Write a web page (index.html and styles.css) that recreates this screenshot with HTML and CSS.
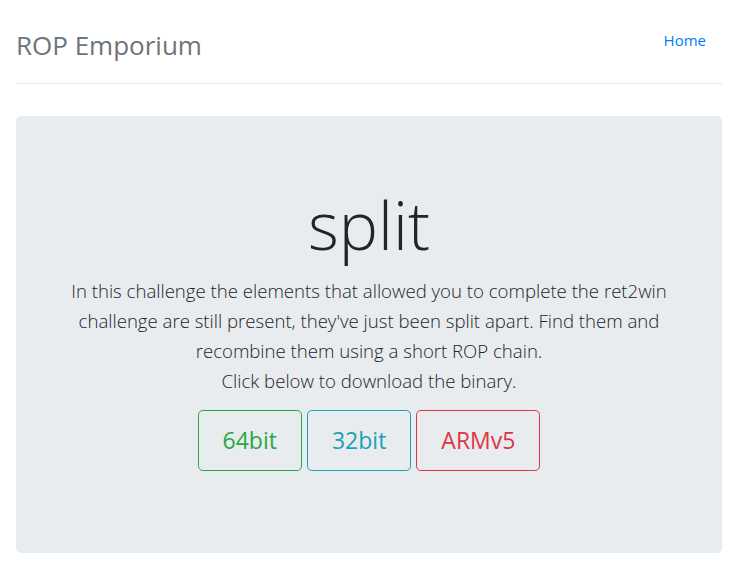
FILE: index.html
```html
<!DOCTYPE html>
<html lang="en">
<head>
<meta charset="utf-8">
<title>split</title>
<link rel="stylesheet" href="styles.css">
</head>
<body>
<div class="container">
  <header class="header">
    <h3 class="brand">ROP Emporium</h3>
    <nav class="nav">
      <a class="nav-link" href="#">Home</a>
    </nav>
  </header>
  <main class="jumbotron">
    <h1 class="display">split</h1>
    <p class="lead">In this challenge the elements that allowed you to complete the ret2win challenge are still present, they've just been split apart. Find them and recombine them using a short ROP chain.<br>Click below to download the binary.</p>
    <div class="buttons">
      <a class="btn btn-success" href="#">64bit</a>
      <a class="btn btn-info" href="#">32bit</a>
      <a class="btn btn-danger" href="#">ARMv5</a>
    </div>
  </main>
</div>
</body>
</html>
```
FILE: styles.css
```css
html, body {
  margin: 0;
  padding: 0;
  background: #fff;
}
body {
  font-family: "Open Sans", "Noto Sans", sans-serif;
  color: #212529;
  font-size: 16px;
  line-height: 1.5;
  padding-top: 20px;
}
.container {
  width: 706px;
  margin-left: 16px;
}
.header {
  display: flex;
  justify-content: space-between;
  align-items: flex-start;
  border-bottom: 1px solid #e5e5e5;
  padding-bottom: 14px;
  margin-bottom: 32px;
}
.brand {
  margin: 1px 0 0;
  font-size: 26px;
  font-weight: 400;
  line-height: 48px;
  color: #6c757d;
}
.nav-link {
  display: block;
  padding: 8px 16px;
  font-size: 15px;
  line-height: 24px;
  color: #007bff;
  text-decoration: none;
}
.jumbotron {
  background: #e9ecef;
  border-radius: 4.8px;
  padding: 64px 32px 66px;
  text-align: center;
}
.display {
  margin: 0 0 8px;
  font-size: 66px;
  font-weight: 300;
  line-height: 88px;
}
.lead {
  margin: 0 0 14px;
  font-size: 18.6px;
  font-weight: 300;
  line-height: 30px;
}
.buttons {
  display: flex;
  justify-content: center;
  gap: 5px;
  margin-bottom: 16px;
}
.btn {
  display: inline-block;
  padding: 12px 24px;
  font-size: 23px;
  line-height: 35px;
  border: 1px solid;
  border-radius: 4.8px;
  text-decoration: none;
  font-weight: 400;
}
.btn-success { color: #28a745; border-color: #28a745; }
.btn-info { color: #17a2b8; border-color: #17a2b8; }
.btn-danger { color: #dc3545; border-color: #dc3545; }
```
